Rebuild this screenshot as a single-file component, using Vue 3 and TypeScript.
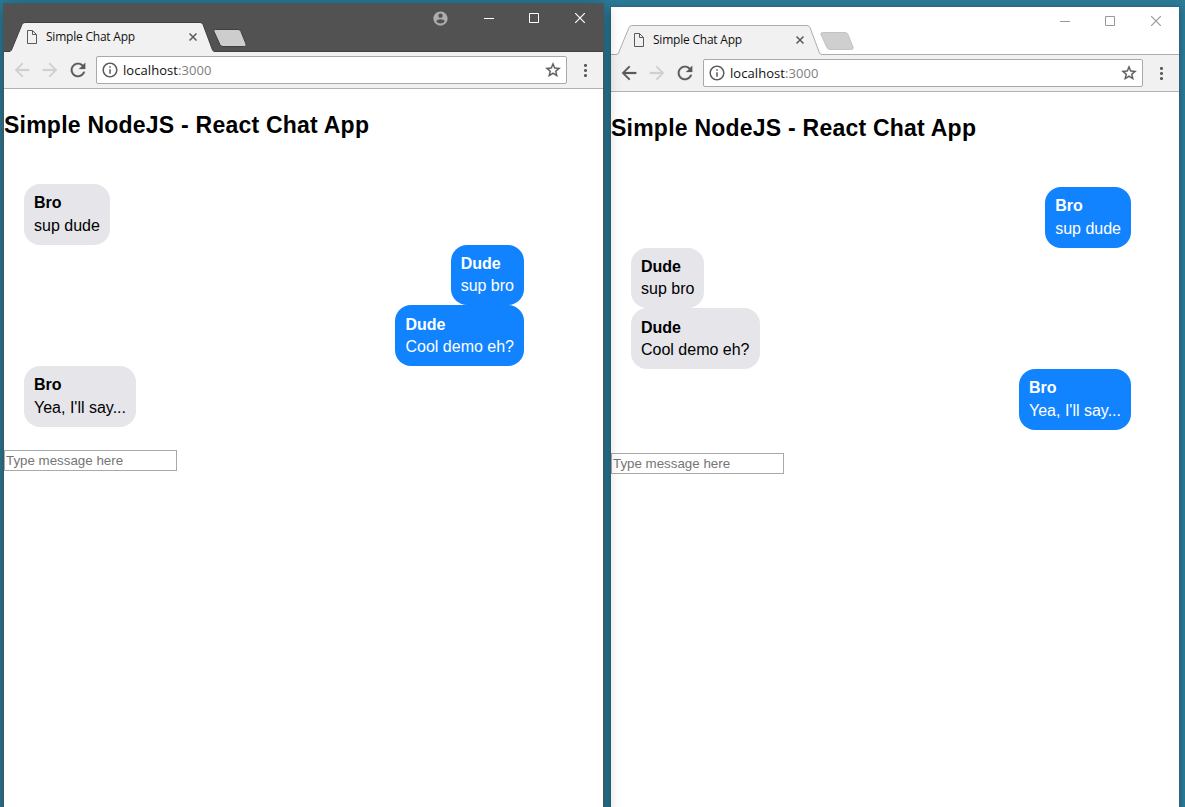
<script setup lang="ts">
interface Message {
  author: string
  text: string
}

interface BrowserWindow {
  user: string
  theme: 'dark' | 'light'
  canGoBack: boolean
  showProfile: boolean
}

const messages: Message[] = [
  { author: 'Bro', text: 'sup dude' },
  { author: 'Dude', text: 'sup bro' },
  { author: 'Dude', text: 'Cool demo eh?' },
  { author: 'Bro', text: "Yea, I'll say..." },
]

const windows: BrowserWindow[] = [
  { user: 'Dude', theme: 'dark', canGoBack: false, showProfile: true },
  { user: 'Bro', theme: 'light', canGoBack: true, showProfile: false },
]
</script>

<template>
  <div class="desktop">
    <section v-for="win in windows" :key="win.user" class="window" :class="win.theme">
      <header class="titlebar">
        <div class="tab">
          <svg class="tab-shape" width="206" height="30" viewBox="0 0 206 30">
            <path class="tab-fill" d="M0 30 L2.500 28 L13 2.500 Q14 0.500 16 0.500 H191 Q193 0.500 194 2.500 L203.500 28 Q204.200 29.500 206 29.500 V30 Z" />
            <path class="tab-line" d="M0 29.500 Q1.800 29.500 2.500 28 L13 2.500 Q14 0.500 16 0.500 H191 Q193 0.500 194 2.500 L203.500 28 Q204.200 29.500 206 29.500" />
          </svg>
          <svg class="page-icon" width="10" height="14" viewBox="0 0 10 14">
            <path d="M0.500 0.500 H5.500 L9.500 4.500 V13.500 H0.500 Z M5.500 0.500 V4.500 H9.500" />
          </svg>
          <span class="tab-title">Simple Chat App</span>
          <svg class="tab-close" width="8" height="8" viewBox="0 0 8 8">
            <path d="M0.500 0.500 L7.500 7.500 M7.500 0.500 L0.500 7.500" />
          </svg>
        </div>
        <svg class="new-tab" width="36" height="20" viewBox="0 0 36 20">
          <path d="M3.500 1.500 H26 Q28 1.500 28.800 3.200 L34 16 Q34.700 18.500 32.500 18.500 H11 Q9 18.500 8 16.700 L2 3.500 Q1.200 1.500 3.500 1.500 Z" />
        </svg>
        <div class="controls">
          <svg v-if="win.showProfile" class="profile" width="17" height="17" viewBox="0 0 24 24">
            <path d="M12 2C6.480 2 2 6.480 2 12s4.480 10 10 10 10-4.480 10-10S17.520 2 12 2zm0 3c1.660 0 3 1.340 3 3s-1.340 3-3 3-3-1.340-3-3 1.340-3 3-3zm0 14.200c-2.500 0-4.710-1.280-6-3.220.030-1.990 4-3.080 6-3.080 1.990 0 5.970 1.090 6 3.080-1.290 1.940-3.500 3.220-6 3.220z" />
          </svg>
          <svg class="minimize" width="10" height="10" viewBox="0 0 10 10"><path d="M0 5.500 H10" /></svg>
          <svg class="maximize" width="10" height="10" viewBox="0 0 10 10"><path d="M0.500 0.500 H9.500 V9.500 H0.500 Z" /></svg>
          <svg class="close" width="10" height="10" viewBox="0 0 10 10"><path d="M0 0 L10 10 M10 0 L0 10" /></svg>
        </div>
      </header>

      <nav class="toolbar">
        <svg class="nav-icon" :class="{ disabled: !win.canGoBack }" width="20" height="20" viewBox="1 1 22 22">
          <path d="M20 10.800H7.830l5.590-5.390L12 4l-8 8 8 8 1.410-1.410L7.830 13.200H20v-2.400z" />
        </svg>
        <svg class="nav-icon disabled" width="20" height="20" viewBox="1 1 22 22">
          <path d="M12 4l-1.410 1.410L16.170 10.800H4v2.400h12.170l-5.580 5.390L12 20l8-8z" />
        </svg>
        <svg class="nav-icon" width="20" height="20" viewBox="1 1 22 22">
          <path d="M17.650 6.350C16.200 4.900 14.210 4 12 4c-4.420 0-7.990 3.580-7.990 8s3.570 8 7.990 8c3.730 0 6.840-2.550 7.730-6h-2.080c-.820 2.330-3.040 4-5.650 4-3.310 0-6-2.690-6-6s2.690-6 6-6c1.660 0 3.140.690 4.220 1.780L13 11h7V4l-2.350 2.350z" />
        </svg>
        <div class="address">
          <svg class="info" width="18" height="18" viewBox="0 0 24 24">
            <path d="M11 17h2v-6h-2v6zm1-15C6.480 2 2 6.480 2 12s4.480 10 10 10 10-4.480 10-10S17.520 2 12 2zm0 18c-4.410 0-8-3.590-8-8s3.590-8 8-8 8 3.590 8 8-3.590 8-8 8zM11 9h2V7h-2v2z" />
          </svg>
          <span class="url">localhost<span class="port">:3000</span></span>
          <svg class="star" width="18" height="18" viewBox="0 0 24 24">
            <path d="M22 9.240l-7.190-.620L12 2 9.190 8.630 2 9.240l5.460 4.730L5.820 21 12 17.270 18.180 21l-1.630-7.030L22 9.240zM12 15.400l-3.760 2.270 1-4.280-3.320-2.880 4.380-.380L12 6.100l1.710 4.040 4.380.380-3.320 2.880 1 4.280L12 15.400z" />
          </svg>
        </div>
        <svg class="menu" width="3" height="13" viewBox="0 0 3 13">
          <circle cx="1.500" cy="1.500" r="1.550" /><circle cx="1.500" cy="6.500" r="1.550" /><circle cx="1.500" cy="11.500" r="1.550" />
        </svg>
      </nav>

      <main class="page">
        <h2>Simple NodeJS - React Chat App</h2>
        <div class="messages">
          <div
            v-for="(message, i) in messages"
            :key="i"
            class="message"
            :class="{ own: message.author === win.user }"
          >
            <strong>{{ message.author }}</strong>
            <span>{{ message.text }}</span>
          </div>
        </div>
        <input type="text" placeholder="Type message here" />
      </main>
    </section>
  </div>
</template>

<style>
body {
  margin: 0;
  overflow: hidden;
}
</style>

<style scoped>
.desktop {
  box-sizing: border-box;
  display: flex;
  align-items: flex-start;
  gap: 8px;
  width: 1185px;
  height: 807px;
  padding: 4px 6px 0 4px;
  overflow: hidden;
  background: #2b7a96;
}

.window {
  position: relative;
  display: flex;
  flex-direction: column;
  height: 820px;
  background: #fff;
}

.dark {
  --bar: #525252;
  --line: #404040;
  --control: #fff;
  --new-tab: #cdcdcd;
  --new-tab-line: #3f3f3f;
  z-index: 1;
  width: 599px;
  box-shadow: 0 0 0 1px rgba(80, 80, 80, 0.65), 0 3px 16px rgba(0, 0, 0, 0.38);
}

.light {
  --bar: #fff;
  --line: #adadad;
  --control: #999;
  --new-tab: #cfcfcf;
  --new-tab-line: #c3c3c3;
  width: 568px;
  margin-top: 3px;
  box-shadow: 0 0 0 1px rgba(60, 90, 100, 0.35), 0 2px 8px rgba(0, 0, 0, 0.3);
}

svg {
  flex: none;
  display: block;
}

.titlebar {
  box-sizing: border-box;
  display: flex;
  align-items: flex-start;
  height: 48px;
  padding-left: 5px;
  border-bottom: 1px solid var(--line);
  background: var(--bar);
}

.tab {
  position: relative;
  box-sizing: border-box;
  display: flex;
  align-items: center;
  width: 206px;
  height: 30px;
  margin-top: 18px;
  padding: 0 18px;
}

.tab-shape {
  position: absolute;
  left: 0;
  top: 0;
}

.tab-fill {
  fill: #f1f1f1;
}

.tab-line {
  fill: none;
  stroke: var(--line);
}

.page-icon {
  position: relative;
  fill: none;
  stroke: #5a5a5a;
}

.tab-title {
  position: relative;
  flex: 1;
  margin-left: 9px;
  font: 12px/16px "Open Sans", "Noto Sans", sans-serif;
  letter-spacing: -0.22px;
  color: #111;
  white-space: nowrap;
}

.tab-close {
  position: relative;
  fill: none;
  stroke: #5a5a5a;
  stroke-width: 1.5;
}

.new-tab {
  margin: 24px 0 0 -3px;
  fill: var(--new-tab);
  stroke: var(--new-tab-line);
}

.controls {
  display: flex;
  align-items: center;
  margin: 5px 18px 0 auto;
  height: 18px;
  fill: none;
  stroke: var(--control);
}

.profile {
  margin: 0 35.500px 0 0;
  fill: #adadad;
  stroke: none;
}

.minimize {
  margin-right: 35px;
}

.maximize {
  margin-right: 36px;
}

.close {
  stroke-width: 1.2;
}

.toolbar {
  box-sizing: border-box;
  display: flex;
  align-items: center;
  height: 37px;
  padding: 0 16px 0 8px;
  border-bottom: 1px solid #b3b3b3;
  background: #f1f1f1;
}

.nav-icon {
  margin-right: 8px;
  fill: #5a5a5a;
  stroke: #5a5a5a;
  stroke-width: 0.2;
}

.nav-icon.disabled {
  fill: #d0d0d0;
  stroke: #d0d0d0;
}

.address {
  box-sizing: border-box;
  display: flex;
  flex: 1;
  align-items: center;
  height: 28px;
  padding: 0 4px;
  border: 1px solid #a9a9a9;
  border-radius: 2px;
  background: #fff;
}

.info,
.star,
.menu {
  fill: #5a5a5a;
}

.star {
  stroke: #5a5a5a;
  stroke-width: 0.4;
}

.url {
  flex: 1;
  margin-left: 4px;
  font: 13px/18px "Open Sans", "Noto Sans", sans-serif;
  letter-spacing: 0.06px;
  color: #111;
}

.port {
  color: #808080;
}

.menu {
  margin-left: 17px;
}

.page {
  font-family: "Liberation Sans", Arial, sans-serif;
  color: #000;
}

h2 {
  margin: 22px 0 45px;
  font-size: 23px;
  line-height: 28px;
  letter-spacing: 0.23px;
  white-space: nowrap;
}

.messages {
  display: flex;
  flex-direction: column;
  align-items: flex-start;
  width: 500px;
  margin: 0 0 23.200px 20px;
}

.message {
  display: flex;
  flex-direction: column;
  padding: 8.200px 10px 7.700px;
  border-radius: 16px;
  background: #e5e5ea;
  font-size: 16px;
  line-height: 22.400px;
}

.message.own {
  align-self: flex-end;
  background: #1283ff;
  color: #fff;
}

input {
  display: block;
  box-sizing: border-box;
  width: 173px;
  height: 21px;
  padding: 1px;
  border: 1px solid #a9a9a9;
  background: #fff;
  font: 13.333px "Liberation Sans", Arial, sans-serif;
}

input::placeholder {
  color: #757575;
}
</style>
